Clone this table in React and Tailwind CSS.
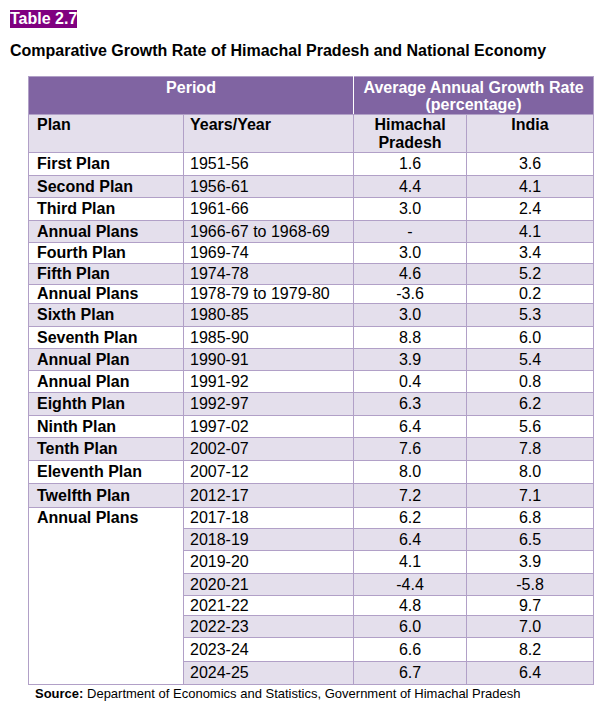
import React from "react";

const rows = [
  { plan: "First Plan", years: "1951-56", hp: "1.6", india: "3.6", h: 23 },
  { plan: "Second Plan", years: "1956-61", hp: "4.4", india: "4.1", h: 22 },
  { plan: "Third Plan", years: "1961-66", hp: "3.0", india: "2.4", h: 23 },
  { plan: "Annual Plans", years: "1966-67 to 1968-69", hp: "-", india: "4.1", h: 22 },
  { plan: "Fourth Plan", years: "1969-74", hp: "3.0", india: "3.4", h: 21 },
  { plan: "Fifth Plan", years: "1974-78", hp: "4.6", india: "5.2", h: 21 },
  { plan: "Annual Plans", years: "1978-79 to 1979-80", hp: "-3.6", india: "0.2", h: 18 },
  { plan: "Sixth Plan", years: "1980-85", hp: "3.0", india: "5.3", h: 23 },
  { plan: "Seventh Plan", years: "1985-90", hp: "8.8", india: "6.0", h: 22 },
  { plan: "Annual Plan", years: "1990-91", hp: "3.9", india: "5.4", h: 22 },
  { plan: "Annual Plan", years: "1991-92", hp: "0.4", india: "0.8", h: 22 },
  { plan: "Eighth Plan", years: "1992-97", hp: "6.3", india: "6.2", h: 23 },
  { plan: "Ninth Plan", years: "1997-02", hp: "6.4", india: "5.6", h: 22 },
  { plan: "Tenth Plan", years: "2002-07", hp: "7.6", india: "7.8", h: 23 },
  { plan: "Eleventh Plan", years: "2007-12", hp: "8.0", india: "8.0", h: 23 },
  { plan: "Twelfth Plan", years: "2012-17", hp: "7.2", india: "7.1", h: 24 },
];

const annual = [
  { years: "2017-18", hp: "6.2", india: "6.8", h: 21 },
  { years: "2018-19", hp: "6.4", india: "6.5", h: 22 },
  { years: "2019-20", hp: "4.1", india: "3.9", h: 23 },
  { years: "2020-21", hp: "-4.4", india: "-5.8", h: 22 },
  { years: "2021-22", hp: "4.8", india: "9.7", h: 20 },
  { years: "2022-23", hp: "6.0", india: "7.0", h: 22 },
  { years: "2023-24", hp: "6.6", india: "8.2", h: 24 },
  { years: "2024-25", hp: "6.7", india: "6.4", h: 23 },
];

const cell = "border border-[#b1a0c7] p-0 leading-[18px]";

export default function App() {
  return (
    <div
      className="w-[612px] h-[705px] bg-white text-black pt-[7px] pl-[10px]"
      style={{ fontFamily: '"Liberation Sans", Arial, sans-serif' }}
    >
      <div className="h-[18px]">
        <span className="inline-block bg-[#800080] text-white font-bold text-[16px] leading-[18px]">
          Table 2.7
        </span>
      </div>
      <h1 className="mt-[17px] h-[18px] font-bold text-[16px] leading-[18px]">
        Comparative Growth Rate of Himachal Pradesh and National Economy
      </h1>
      <table className="ml-[18px] mt-[16px] w-[565px] table-fixed border-collapse text-[16px]">
        <colgroup>
          <col className="w-[155px]" />
          <col className="w-[170px]" />
          <col className="w-[113px]" />
          <col className="w-[127px]" />
        </colgroup>
        <thead>
          <tr className="h-[38px] bg-[#8064a2] text-white font-bold">
            <th
              colSpan={2}
              className="border border-[#b1a0c7] border-r-white p-0 pt-[2px] align-top text-center leading-[17px]"
            >
              Period
            </th>
            <th
              colSpan={2}
              className="border border-[#b1a0c7] border-l-white p-0 pt-[2px] align-top text-center leading-[17px]"
            >
              Average Annual Growth Rate
              <br />
              (percentage)
            </th>
          </tr>
          <tr className="h-[37px] bg-[#e4dfec] font-bold">
            <th className={`${cell} pl-[8px] pt-[1px] align-top text-left`}>Plan</th>
            <th className={`${cell} pl-[6px] pt-[1px] align-top text-left`}>Years/Year</th>
            <th className={`${cell} pt-[1px] align-top text-center`}>
              Himachal
              <br />
              Pradesh
            </th>
            <th className={`${cell} pt-[1px] align-top text-center`}>India</th>
          </tr>
        </thead>
        <tbody>
          {rows.map((r, i) => (
            <tr
              key={i}
              className={i % 2 === 1 ? "bg-[#e4dfec]" : "bg-white"}
              style={{ height: r.h }}
            >
              <td className={`${cell} pl-[8px] font-bold`}>{r.plan}</td>
              <td className={`${cell} pl-[6px]`}>{r.years}</td>
              <td className={`${cell} text-center`}>{r.hp}</td>
              <td className={`${cell} text-center`}>{r.india}</td>
            </tr>
          ))}
          {annual.map((r, i) => (
            <tr
              key={"a" + i}
              className={i % 2 === 1 ? "bg-[#e4dfec]" : "bg-white"}
              style={{ height: r.h }}
            >
              {i === 0 && (
                <td
                  rowSpan={annual.length}
                  className={`${cell} bg-white pl-[8px] pt-[1px] align-top font-bold`}
                >
                  Annual Plans
                </td>
              )}
              <td className={`${cell} pl-[6px]`}>{r.years}</td>
              <td className={`${cell} text-center`}>{r.hp}</td>
              <td className={`${cell} text-center`}>{r.india}</td>
            </tr>
          ))}
        </tbody>
      </table>
      <p className="ml-[25px] mt-[1px] text-[13px] leading-[16px]">
        <span className="font-bold">Source:</span> Department of Economics and
        Statistics, Government of Himachal Pradesh
      </p>
    </div>
  );
}
